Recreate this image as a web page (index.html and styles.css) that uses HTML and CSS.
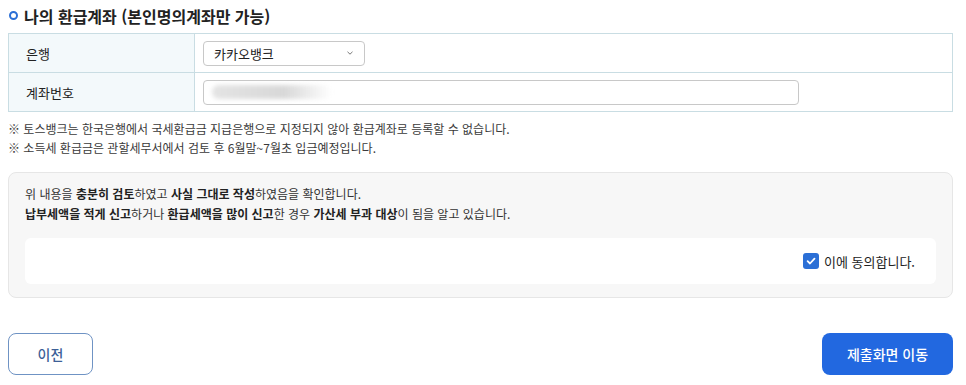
FILE: index.html
```html
<!DOCTYPE html>
<html lang="ko">
  <head>
    <meta charset="UTF-8" />
    <meta name="viewport" content="width=device-width, initial-scale=1.0" />
    <title>환급계좌</title>
    <link rel="stylesheet" href="styles.css">
  </head>
  <body>
    <div class="page">
      <h2 class="sec-title"><span class="dot"></span>나의 환급계좌 (본인명의계좌만 가능)</h2>
      <div class="acct-table">
        <div class="acct-row">
          <div class="acct-label">은행</div>
          <div class="acct-value">
            <div class="bank-select">
              <span>카카오뱅크</span>
              <svg width="8" height="6" viewBox="0 0 8 6"><path d="M1.5 1.8 L4 4.2 L6.5 1.8" fill="none" stroke="#777" stroke-width="1"/></svg>
            </div>
          </div>
        </div>
        <div class="acct-row">
          <div class="acct-label">계좌번호</div>
          <div class="acct-value">
            <div class="acct-input"><span class="blur"></span></div>
          </div>
        </div>
      </div>
      <ul class="notes">
        <li>※ 토스뱅크는 한국은행에서 국세환급금 지급은행으로 지정되지 않아 환급계좌로 등록할 수 없습니다.</li>
        <li>※ 소득세 환급금은 관할세무서에서 검토 후 6월말~7월초 입금예정입니다.</li>
      </ul>
      <div class="confirm-box">
        <p>위 내용을 <b>충분히 검토</b>하였고 <b>사실 그대로 작성</b>하였음을 확인합니다.<br>
        <b>납부세액을 적게 신고</b>하거나 <b>환급세액을 많이 신고</b>한 경우 <b>가산세 부과 대상</b>이 됨을 알고 있습니다.</p>
        <div class="agree-bar">
          <label class="agree">
            <span class="check"><svg width="12" height="12" viewBox="0 0 12 12"><path d="M2.6 6.2 L5 8.5 L9.5 3.6" fill="none" stroke="#fff" stroke-width="1.8" stroke-linecap="round" stroke-linejoin="round"/></svg></span>
            이에 동의합니다.
          </label>
        </div>
      </div>
      <div class="actions">
        <button class="btn-prev">이전</button>
        <button class="btn-next">제출화면 이동</button>
      </div>
    </div>
  </body>
</html>
```

FILE: styles.css
```css
body {
  margin: 0;
  font-family: "Noto Sans CJK KR", "Noto Sans", sans-serif;
  color: #222;
  background: #fff;
}
.page {
  padding: 0 13px 0 8px;
}
.sec-title {
  margin: 0;
  height: 33px;
  display: flex;
  align-items: center;
  font-size: 16px;
  font-weight: 700;
  color: #222;
  padding-bottom: 2px;
  box-sizing: border-box;
}
.dot {
  width: 5px;
  height: 5px;
  border: 2px solid #2b6fd6;
  border-radius: 50%;
  margin: 0 6px 0 1px;
}
.acct-table {
  border-top: 1px solid #c9dde3;
}
.acct-row {
  display: flex;
  height: 38px;
  border: 1px solid #c9dde3;
  border-top: none;
}
.acct-label {
  width: 186px;
  background: #f3f9fb;
  border-right: 1px solid #c9dde3;
  display: flex;
  align-items: center;
  padding-left: 17px;
  box-sizing: border-box;
  font-size: 13px;
}
.acct-value {
  flex: 1;
  display: flex;
  align-items: center;
  padding-left: 8px;
}
.bank-select {
  width: 162px;
  height: 25px;
  border: 1px solid #c8c8c8;
  border-radius: 4px;
  display: flex;
  align-items: center;
  justify-content: space-between;
  padding: 0 10px 0 10px;
  box-sizing: border-box;
  font-size: 13px;
}
.acct-input {
  width: 596px;
  height: 25px;
  border: 1px solid #c8c8c8;
  border-radius: 4px;
  box-sizing: border-box;
  display: flex;
  align-items: center;
  padding-left: 8px;
}
.blur {
  width: 120px;
  height: 14px;
  border-radius: 7px;
  background: linear-gradient(90deg, #e4e4e4, #d8d8d8 60%, rgba(230,230,230,0));
  filter: blur(2px);
}
.notes {
  list-style: none;
  margin: 7px 0 0;
  padding: 0;
  font-size: 12px;
  line-height: 19px;
  color: #3a3a3a;
}
.confirm-box {
  margin-top: 15px;
  background: #f7f7f7;
  border: 1px solid #e6e6e6;
  border-radius: 8px;
  padding: 11px 16px 13px 16px;
}
.confirm-box p {
  margin: 0;
  font-size: 12px;
  line-height: 20px;
  color: #333;
}
.confirm-box b {
  font-weight: 700;
  color: #222;
}
.agree-bar {
  margin-top: 14px;
  height: 46px;
  background: #fff;
  border-radius: 6px;
  display: flex;
  align-items: center;
  justify-content: flex-end;
  padding-right: 21px;
}
.agree {
  display: flex;
  align-items: center;
  gap: 5px;
  font-size: 13px;
  color: #222;
}
.check {
  width: 16px;
  height: 16px;
  border-radius: 3px;
  background: #2b6fd6;
  display: flex;
  align-items: center;
  justify-content: center;
}
.actions {
  display: flex;
  justify-content: space-between;
  margin-top: 35px;
}
.actions button {
  height: 42px;
  border-radius: 8px;
  font-family: inherit;
  font-size: 14px;
  font-weight: 500;
  cursor: pointer;
}
.btn-prev {
  width: 85px;
  background: #fff;
  border: 1px solid #6f93c4;
  color: #3d5f97;
}
.btn-next {
  width: 131px;
  background: #2268e0;
  border: none;
  color: #fff;
}
```
